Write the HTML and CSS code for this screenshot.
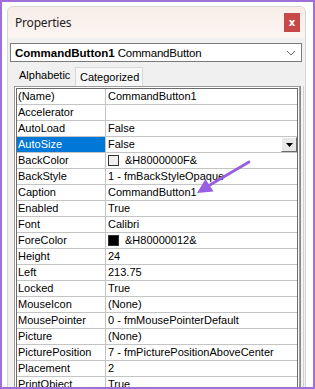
FILE: index.html
```html
<!DOCTYPE html>
<html lang="en">
<head>
    <meta charset="UTF-8">
    <title>Properties</title>
    <link rel="stylesheet" href="styles.css">
</head>
<body>
    <div class="frame">
        <div class="panel">
            <header class="panel-head">
                <span class="title">Properties</span>
                <span class="close">x</span>
            </header>

            <div class="object-select">
                <b>CommandButton1</b>&nbsp;CommandButton
                <svg class="chevron" width="10" height="6" viewBox="0 0 10 6"><path d="M1 1 L5 5 L9 1" fill="none" stroke="#666" stroke-width="1"/></svg>
            </div>

            <div class="tabs">
                <span class="tab active">Alphabetic</span>
                <span class="tab">Categorized</span>
            </div>

            <div class="grid-wrap">
                <div class="grid-outer">
                    <div class="grid">
                        <div class="row"><div class="name">(Name)</div><div class="value">CommandButton1</div></div>
                        <div class="row"><div class="name">Accelerator</div><div class="value"></div></div>
                        <div class="row"><div class="name">AutoLoad</div><div class="value">False</div></div>
                        <div class="row selected"><div class="name">AutoSize</div><div class="value">False<span class="drop-btn"><svg width="7" height="4" viewBox="0 0 7 4"><path d="M0 0 H7 L3.5 4 Z" fill="#000"/></svg></span></div></div>
                        <div class="row"><div class="name">BackColor</div><div class="value"><span class="swatch"></span>&amp;H8000000F&amp;</div></div>
                        <div class="row"><div class="name">BackStyle</div><div class="value">1 - fmBackStyleOpaque</div></div>
                        <div class="row"><div class="name">Caption</div><div class="value">CommandButton1</div></div>
                        <div class="row"><div class="name">Enabled</div><div class="value">True</div></div>
                        <div class="row"><div class="name">Font</div><div class="value">Calibri</div></div>
                        <div class="row"><div class="name">ForeColor</div><div class="value"><span class="swatch dark"></span>&amp;H80000012&amp;</div></div>
                        <div class="row"><div class="name">Height</div><div class="value">24</div></div>
                        <div class="row"><div class="name">Left</div><div class="value">213.75</div></div>
                        <div class="row"><div class="name">Locked</div><div class="value">True</div></div>
                        <div class="row"><div class="name">MouseIcon</div><div class="value">(None)</div></div>
                        <div class="row"><div class="name">MousePointer</div><div class="value">0 - fmMousePointerDefault</div></div>
                        <div class="row"><div class="name">Picture</div><div class="value">(None)</div></div>
                        <div class="row"><div class="name">PicturePosition</div><div class="value">7 - fmPicturePositionAboveCenter</div></div>
                        <div class="row"><div class="name">Placement</div><div class="value">2</div></div>
                        <div class="row"><div class="name">PrintObject</div><div class="value">True</div></div>
                    </div>
                </div>
                <div class="scroll-edge"></div>
            </div>
        </div>

        <!-- annotation arrow pointing at Caption -->
        <svg class="arrow" width="65" height="45" viewBox="0 0 65 45">
            <line x1="59" y1="7" x2="19" y2="30.5" stroke="#9a5ee0" stroke-width="2.8" stroke-linecap="round"/>
            <path d="M7 38 L23.5 36.5 L15.5 24 Z" fill="#9a5ee0"/>
        </svg>
    </div>
</body>
</html>
```

FILE: styles.css
```css
/* General */
body {
    margin: 0;
    padding: 0;
    background-color: white;
    font-family: "Liberation Sans", Arial, sans-serif;
}

.frame {
    position: relative;
    box-sizing: border-box;
    width: 315px;
    height: 389px;
    border: 2px solid #a070d8;
    padding: 4px 0 0 5px;
    background-color: white;
    overflow: hidden;
}

/* Panel */
.panel {
    box-sizing: border-box;
    width: 299px;
    height: 400px;
    border: 1px solid #d6d6d6;
    border-radius: 6px 6px 0 0;
    background-color: #f0f0f0;
    overflow: hidden;
}

.panel-head {
    height: 31px;
    display: flex;
    justify-content: space-between;
    align-items: center;
    padding: 0 5px 0 7px;
    background: linear-gradient(#f8ede7, #fbf5f2);
}

.panel-head .title {
    font-family: "Noto Sans", sans-serif;
    font-size: 12px;
    letter-spacing: -0.2px;
    color: #222;
}

.close {
    width: 16px;
    height: 19px;
    display: flex;
    justify-content: center;
    align-items: center;
    margin-top: -1px;
    background-color: #c84747;
    color: white;
    font-family: "DejaVu Sans", sans-serif;
    font-size: 10px;
    font-weight: bold;
}

/* Object dropdown */
.object-select {
    box-sizing: border-box;
    width: 292px;
    height: 19px;
    margin: 5px 0 0 2px;
    padding-left: 4px;
    display: flex;
    align-items: center;
    border: 1px solid #7a7a7a;
    background-color: white;
    font-size: 11.5px;
    letter-spacing: -0.2px;
    color: #000;
}

.object-select b {
    font-size: 11.5px;
    letter-spacing: 0;
}

.object-select .chevron {
    margin-left: auto;
    margin-right: 5px;
}

/* Tabs */
.tabs {
    display: flex;
    align-items: flex-end;
    height: 21px;
    margin: 3px 0 0 3px;
}

.tab {
    box-sizing: border-box;
    height: 19px;
    display: flex;
    align-items: center;
    padding: 0 3px 0 4px;
    border: 1px solid #d9d9d9;
    border-bottom: none;
    background-color: #f7f7f7;
    font-size: 11px;
    color: #000;
}

.tab.active {
    width: 64px;
    height: 21px;
    padding-left: 7px;
    padding-bottom: 2px;
    border-color: #f0f0f0;
    background-color: #f0f0f0;
}

/* Property grid */
.grid-wrap {
    display: flex;
    margin-left: 6px;
}

.grid-outer {
    box-sizing: border-box;
    width: 286px;
    border: 1px solid #9a9a9a;
    border-bottom: none;
    padding: 1px 1px 0 1px;
    background-color: white;
}

.scroll-edge {
    width: 2px;
    border-left: 1px solid #8a8a8a;
    border-right: 1px solid #d0d0d0;
    background-color: #f4f4f4;
}

.grid {
    border: 1px solid #6b6b6b;
    border-bottom: none;
    background-color: white;
}

.row {
    display: flex;
    height: 16px;
    box-sizing: border-box;
    border-bottom: 1px solid #c4c4c4;
    font-size: 11px;
    line-height: 15px;
    color: #000;
}

.row .name {
    width: 89px;
    padding-left: 1px;
    box-sizing: border-box;
    border-right: 1px solid #c4c4c4;
    white-space: nowrap;
}

.row .value {
    flex: 1;
    display: flex;
    align-items: center;
    padding-left: 2px;
    white-space: nowrap;
}

.row.selected .name {
    background-color: #0078d7;
    color: white;
}

.swatch {
    box-sizing: border-box;
    width: 11px;
    height: 11px;
    margin-right: 6px;
    border: 1px solid #333;
    background-color: #f0f0f0;
}

.swatch.dark {
    background-color: #000;
}

.drop-btn {
    box-sizing: border-box;
    width: 16px;
    height: 15px;
    margin-left: auto;
    display: flex;
    justify-content: center;
    align-items: center;
    border: 1px solid;
    border-color: #fff #6b6b6b #6b6b6b #fff;
    background-color: #e8e8e8;
}

/* Annotation */
.arrow {
    position: absolute;
    left: 188px;
    top: 153px;
}
```
